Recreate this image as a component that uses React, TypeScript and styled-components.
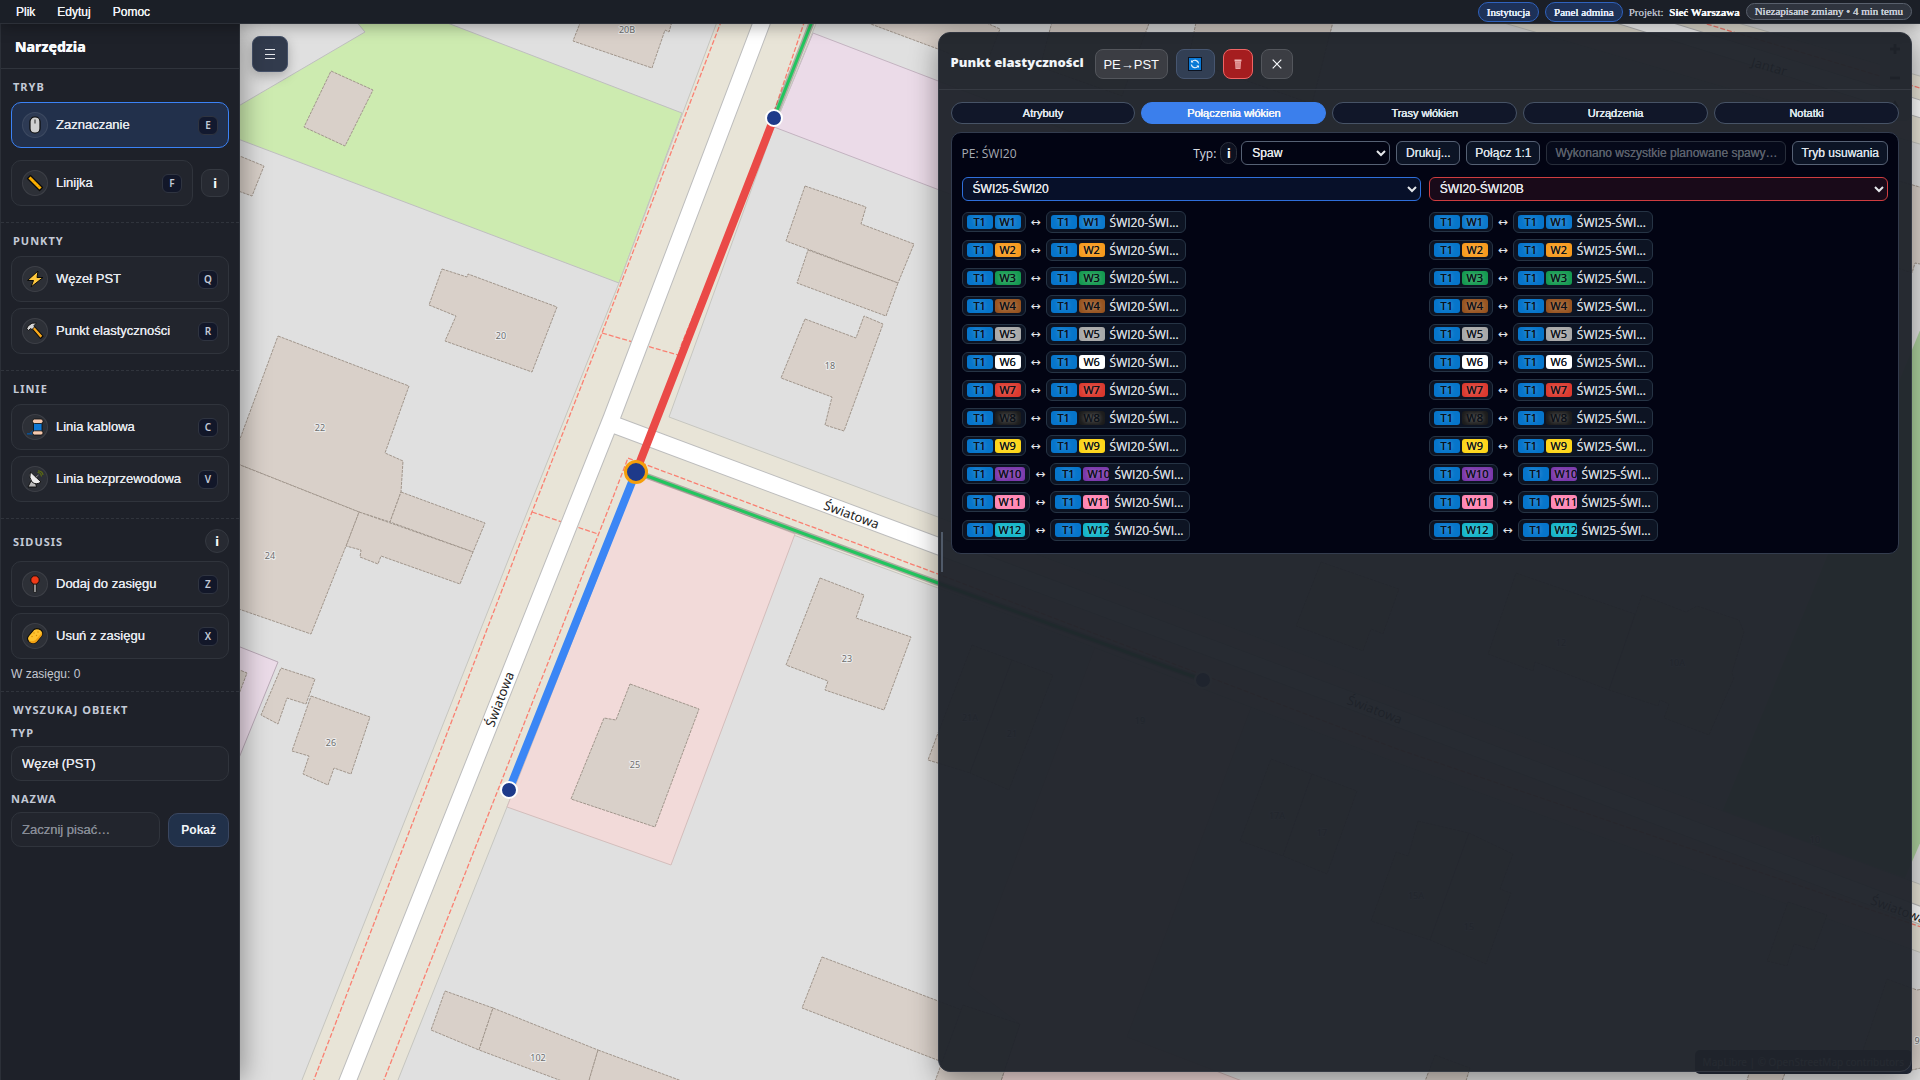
import React from "react";
import styled, { createGlobalStyle, css } from "styled-components";

const sans = `"Liberation Sans", Arial, sans-serif`;
const ui = `"Noto Sans", "Open Sans", sans-serif`;
const plain = `"Open Sans", "Noto Sans", sans-serif`;
const serif = `"Liberation Serif", "Times New Roman", serif`;

/* firms up the glyph edges so light text on dark reads as medium weight */
const firm = css`
  text-shadow: 0 0 0 currentColor;
`;

const GlobalStyle = createGlobalStyle`
  *, *::before, *::after { box-sizing: border-box; }
  html, body { margin: 0; height: 100%; }
  body { background: #1e222a; color: #e5e7eb; font-family: ${sans}; font-size: 12px; }
  #root { height: 100%; }
  button, input, select { font-family: ${sans}; color: inherit; margin: 0; }
  h1, h2, h3, p, ul { margin: 0; padding: 0; }
`;

const Page = styled.div`
  display: flex;
  flex-direction: column;
  height: 100vh;
  overflow: hidden;
`;

/* ---------- top bar ---------- */

const TopBar = styled.header`
  position: relative;
  z-index: 3;
  display: flex;
  align-items: center;
  justify-content: space-between;
  flex: none;
  height: 24px;
  padding: 0 8px;
  background: #1b1f27;
  border-bottom: 1px solid #2c3038;
  box-shadow: 0 2px 16px rgba(0, 0, 0, 0.35);
`;

const Menu = styled.nav`
  display: flex;
  gap: 6px;
`;

const MenuItem = styled.button`
  border: 0;
  padding: 0 8px;
  background: none;
  font-size: 12px;
  line-height: 22px;
  color: #f1f3f6;
  ${firm}
`;

const Status = styled.div`
  display: flex;
  align-items: center;
  gap: 6px;
  font-family: ${serif};
  font-size: 11px;
  color: #b6bcc7;
`;

const Pill = styled.button`
  height: 20px;
  padding: 0 8px;
  border: 1px solid #2f62bd;
  border-radius: 999px;
  background: #1d3158;
  font-family: ${serif};
  font-size: 11px;
  color: #e3ebfa;
  text-shadow: 0 0 0 currentColor, 0 0 0 currentColor;
`;

const Project = styled.span`
  ${firm}
  strong { margin-left: 3px; color: #f8fafc; }
`;

const SaveState = styled.span`
  padding: 0 8px;
  border: 1px solid #59606c;
  border-radius: 999px;
  background: #2f343e;
  font-size: 11px;
  line-height: 15px;
  color: #c5cad3;
  text-shadow: 0 0 0 currentColor, 0 0 0 currentColor;
`;

/* ---------- sidebar ---------- */

const Body = styled.div`
  display: flex;
  flex: 1;
  min-height: 0;
`;

const Sidebar = styled.aside`
  position: relative;
  z-index: 2;
  flex: none;
  width: 240px;
  background: #1e2129;
  border: solid #2c3038;
  border-width: 0 1px;
  box-shadow: 4px 0 24px rgba(0, 0, 0, 0.35);
`;

const SidebarTitle = styled.h1`
  height: 45px;
  padding: 0 14px;
  border-bottom: 1px solid #30343c;
  font-family: ${ui};
  font-size: 14px;
  font-weight: 800;
  line-height: 46px;
  color: #f8fafc;
  ${firm}
`;

const Section = styled.section<{ $gap?: number; $end?: number }>`
  display: flex;
  flex-direction: column;
  gap: ${(p) => p.$gap ?? 6}px;
  padding: 10px 10px ${(p) => p.$end ?? 16}px;
  border-bottom: 1px dashed #30343c;
  &:last-child { border-bottom: 0; }
`;

const SectionHead = styled.div<{ $pull?: number }>`
  display: flex;
  align-items: center;
  justify-content: space-between;
  margin-bottom: ${(p) => p.$pull ?? 2}px;
`;

const SectionTitle = styled.h2`
  padding-left: 2px;
  font-family: ${ui};
  font-size: 11px;
  font-weight: 700;
  line-height: 15px;
  letter-spacing: 1px;
  text-transform: uppercase;
  color: #c3c9d6;
`;

const ToolRow = styled.div`
  display: flex;
  align-items: center;
  gap: 8px;
`;

const Tool = styled.button<{ $active?: boolean }>`
  display: flex;
  align-items: center;
  gap: 8px;
  flex: 1;
  min-height: 46px;
  padding: 0 10px;
  border: 1px solid ${(p) => (p.$active ? "#3b82f6" : "#30343c")};
  border-radius: 10px;
  background: ${(p) => (p.$active ? "#22304b" : "#22252d")};
  font-size: 13px;
  text-align: left;
  color: #e5e8ee;
`;

const ToolIcon = styled.span`
  display: grid;
  place-items: center;
  width: 26px;
  height: 26px;
  border: 1px solid rgba(255, 255, 255, 0.08);
  border-radius: 50%;
  background: rgba(255, 255, 255, 0.05);
`;

const ToolName = styled.span`
  flex: 1;
  padding-bottom: 2px;
  ${firm}
`;

const Key = styled.kbd`
  display: grid;
  place-items: center;
  width: 20px;
  height: 19px;
  border: 1px solid #2f3440;
  border-radius: 6px;
  background: rgba(15, 20, 40, 0.8);
  font-family: ${ui};
  font-size: 10px;
  font-weight: 600;
  color: #c3c9d6;
`;

const Info = styled.button<{ $size: number; $radius: number }>`
  display: grid;
  place-items: center;
  width: ${(p) => p.$size}px;
  height: ${(p) => p.$size}px;
  padding: 0;
  border: 1px solid #353941;
  border-radius: ${(p) => p.$radius}px;
  background: #272a32;
  font-family: ${ui};
  font-size: 12px;
  font-weight: 800;
  color: #f8fafc;
`;

const RangeCount = styled.p`
  font-size: 12px;
  line-height: 18px;
  color: #c3c8d1;
`;

const Field = styled.div`
  display: flex;
  flex-direction: column;
  gap: 5px;
  margin-bottom: 4px;
`;

const FieldLabel = styled.label`
  font-family: ${ui};
  font-size: 11px;
  font-weight: 700;
  line-height: 16px;
  letter-spacing: 1px;
  color: #c3c9d6;
`;

const fieldBox = css`
  height: 35px;
  padding: 0 10px;
  border: 1px solid #30343c;
  border-radius: 10px;
  background: #22252d;
  font-size: 13px;
  color: #e5e8ee;
  ${firm}
`;

const TypeSelect = styled.select`
  ${fieldBox}
  appearance: none;
`;

const NameInput = styled.input`
  ${fieldBox}
  flex: 1;
  min-width: 0;
  &::placeholder { color: #868b95; opacity: 1; }
`;

const ShowButton = styled.button`
  height: 34px;
  padding: 0 12px;
  border: 1px solid #3a4761;
  border-radius: 10px;
  background: #21314a;
  font-size: 12px;
  font-weight: 700;
  color: #f1f5f9;
`;

/* ---------- map ---------- */

const MapArea = styled.main`
  position: relative;
  flex: 1;
  min-width: 0;
  overflow: hidden;
  background: #e0e0e0;
`;

const MapSvg = styled.svg`
  display: block;
  width: 100%;
  height: 100%;
`;

const MenuToggle = styled.button`
  position: absolute;
  top: 12px;
  left: 12px;
  display: grid;
  place-items: center;
  width: 36px;
  height: 36px;
  padding: 0;
  border: 1px solid #46526a;
  border-radius: 8px;
  background: #323b4d;
  box-shadow: 0 4px 12px rgba(0, 0, 0, 0.25);
`;

const ZoomControl = styled.div`
  position: absolute;
  top: 10px;
  right: 10px;
  display: flex;
  flex-direction: column;
  border-radius: 4px;
  background: #c8c8c8;
`;

const ZoomButton = styled.button`
  display: grid;
  place-items: center;
  width: 30px;
  height: 29px;
  padding: 0;
  border: 0;
  background: none;
`;

const Attribution = styled.p`
  position: absolute;
  right: 8px;
  bottom: 6px;
  border-radius: 5px;
  background: #252c3c;
  font-family: ${ui};
  font-size: 10px;
  line-height: 24px;
  color: #d0d4da;
  && { padding: 0 8px; }
  a { color: inherit; text-decoration: none; }
`;

/* ---------- details panel ---------- */

const Panel = styled.section`
  position: absolute;
  top: 8px;
  right: 8px;
  bottom: 8px;
  width: 58%;
  border: 1px solid #343943;
  border-radius: 12px;
  background: rgba(31, 35, 43, 0.965);
  box-shadow: 0 8px 28px rgba(0, 0, 0, 0.4);
`;

const ResizeGrip = styled.div`
  position: absolute;
  top: calc(50% - 20px);
  left: 2px;
  width: 2px;
  height: 40px;
  background: #505a69;
`;

const PanelHead = styled.div`
  display: flex;
  align-items: center;
  gap: 8px;
  height: 57px;
  padding: 6px 12px 0;
  border-bottom: 1px solid #363a42;
`;

const PanelTitle = styled.h2`
  font-family: ${ui};
  font-size: 13px;
  font-weight: 900;
  line-height: 20px;
  color: #f1f5f9;
  && { padding: 0 3px 4px 0; }
`;

const HeadButton = styled.button<{ $tone?: "blue" | "red"; $width: number }>`
  display: grid;
  place-items: center;
  width: ${(p) => p.$width}px;
  height: 30px;
  padding: 0;
  border: 1px solid ${(p) => (p.$tone === "red" ? "#f06464" : p.$tone === "blue" ? "#475670" : "#53565c")};
  border-radius: 8px;
  background: ${(p) => (p.$tone === "red" ? "#a51d1f" : p.$tone === "blue" ? "#323f54" : "#3b3d43")};
  font-size: 13px;
  color: #f8fafc;
`;

const PanelBody = styled.div`
  padding: 12px;
`;

const Tabs = styled.div`
  display: grid;
  grid-template-columns: repeat(5, 1fr);
  gap: 6px;
  margin-bottom: 8px;
`;

const Tab = styled.button<{ $active?: boolean }>`
  height: 22px;
  padding: 0;
  border: 1px solid ${(p) => (p.$active ? "#3b7fec" : "#475366")};
  border-radius: 999px;
  background: ${(p) => (p.$active ? "#3b7fec" : "#111729")};
  font-size: 11px;
  color: ${(p) => (p.$active ? "#f1f5f9" : "#dfe3ea")};
  text-shadow: 0 0 0 currentColor, 0 0 0 currentColor;
`;

const Card = styled.div`
  padding: 8px 10px 12px;
  border: 1px solid #333c4e;
  border-radius: 10px;
  background: #020413;
`;

const Toolbar = styled.div`
  display: flex;
  align-items: center;
  gap: 6px;
  margin-bottom: 12px;
`;

const PointName = styled.span`
  flex: 1;
  font-family: ${plain};
  font-size: 12px;
  color: #a7abb4;
`;

const TypeLabel = styled.label`
  font-family: ${plain};
  font-size: 12px;
  color: #d8dce3;
`;

const TypeInfo = styled.button`
  width: 17px;
  height: 22px;
  margin: 0 -2px;
  padding: 0;
  border: 1px solid #2b303c;
  border-radius: 999px;
  background: #0d1120;
  font-family: ${ui};
  font-size: 12px;
  font-weight: 800;
  color: #f8fafc;
`;

const ModeSelect = styled.select`
  width: 149px;
  height: 24px;
  padding: 0 6px;
  border: 1px solid #566174;
  border-radius: 6px;
  background: #020413;
  font-size: 12px;
  color: #e5e7eb;
  ${firm}
`;

const Action = styled.button<{ $muted?: boolean }>`
  min-width: 64px;
  height: 24px;
  padding: 0 8px;
  border: 1px solid ${(p) => (p.$muted ? "#282e3b" : "#566174")};
  border-radius: 6px;
  background: ${(p) => (p.$muted ? "#060a1a" : "#0c1425")};
  font-size: 12px;
  color: ${(p) => (p.$muted ? "#5c616c" : "#dde1e8")};
  ${firm}
`;

const Columns = styled.div`
  display: grid;
  grid-template-columns: 1fr 1fr;
  gap: 10px 8px;
`;

const CableSelect = styled.select<{ $tone: "blue" | "red" }>`
  height: 24px;
  padding: 0 6px;
  border: 1px solid ${(p) => (p.$tone === "blue" ? "#2f6fdb" : "#cf3d40")};
  border-radius: 6px;
  background: ${(p) => (p.$tone === "blue" ? "#071029" : "#190a19")};
  font-size: 12px;
  color: #e5e7eb;
  ${firm}
`;

const FiberList = styled.ul`
  display: flex;
  flex-direction: column;
  gap: 6px;
  list-style: none;
`;

const FiberRow = styled.li`
  display: flex;
  align-items: center;
  gap: 4px;
  height: 22px;
`;

const Chip = styled.span<{ $target?: boolean }>`
  display: flex;
  align-items: center;
  gap: 2px;
  width: ${(p) => (p.$target ? "140px" : "auto")};
  height: ${(p) => (p.$target ? 22 : 20)}px;
  padding: 0 4px;
  border: 1px solid #263445;
  border-radius: 6px;
  background: #0d1423;
`;

const Tag = styled.span<{ $color: string; $clip?: boolean }>`
  flex: none;
  min-width: 26px;
  width: ${(p) => (p.$clip ? "26px" : "auto")};
  height: 14px;
  padding: 0 4px;
  overflow: hidden;
  border-radius: 3px;
  background: ${(p) => p.$color};
  font-family: ${plain};
  font-size: 11px;
  line-height: 14px;
  text-align: center;
  text-shadow: 0 0 0 #0b1018, 0 0 4px rgba(255, 255, 255, 0.35), 0 0 6px rgba(255, 255, 255, 0.35);
  color: #0b1018;
`;

const CableName = styled.span`
  padding-left: 3px;
  font-family: ${plain};
  font-size: 12px;
  white-space: nowrap;
  color: #d3d7de;
  ${firm}
`;

const Link = styled.span`
  width: 12px;
  font-family: "DejaVu Sans", sans-serif;
  font-size: 12px;
  text-align: center;
  color: #e5e7eb;
`;

/* ---------- icons ---------- */

const I = ({ children, size = 18 }: { children: React.ReactNode; size?: number }) => (
  <svg width={size} height={size} viewBox="0 0 18 18" aria-hidden="true">{children}</svg>
);

const MouseIcon = () => (
  <I><rect x="4" y="1" width="10" height="16" rx="4.500" fill="#cfcfcf" stroke="#0b0b0b" strokeWidth="1.2" /><path d="M9 4v3" stroke="#555" strokeWidth="1.4" strokeLinecap="round" /></I>
);
const RulerIcon = () => (
  <I><path d="M1.5 4.5 4.5 1.5 16.500 13.500 13.500 16.500Z" fill="#ffb200" stroke="#0b0b0b" strokeWidth="1.3" strokeLinejoin="round" /><path d="M6 4.500 5 5.500M8.500 7 7.500 8M11 9.500 10 10.500M13.500 12 12.500 13" stroke="#c98000" strokeWidth=".8" /></I>
);
const BoltIcon = () => (
  <I><path d="M12 1 1.500 10.500H7.500L5 17 17 7.500H11Z" fill="#ffc83d" stroke="#0b0b0b" strokeWidth="1" strokeLinejoin="round" /></I>
);
const HammerIcon = () => (
  <I><path d="M5.500 6 8 4 17 14 14.500 16.500Z" fill="#f8a81b" stroke="#0b0b0b" strokeWidth="1.1" strokeLinejoin="round" /><path d="M.800 6.500 2 4 6 1.200 10.500 1 8 3.500 8.500 5 6 7.500 4.500 6.500 2.500 8.500Z" fill="#d6d6d6" stroke="#0b0b0b" strokeWidth=".9" strokeLinejoin="round" /></I>
);
const ThreadIcon = () => (
  <I><path d="M1 15.800H7" fill="none" stroke="#0b4f8f" strokeWidth="1.6" /><path d="M4 15.500 8 12" fill="none" stroke="#0b4f8f" strokeWidth="1.2" /><rect x="7.500" y="4.500" width="8.500" height="10" fill="#0f78d4" stroke="#0b0b0b" strokeWidth=".8" /><rect x="6.500" y="1" width="10.500" height="4.500" rx="2" fill="#f6c9ae" stroke="#0b0b0b" strokeWidth=".8" /><rect x="6.500" y="12.800" width="10.500" height="4.200" rx="2" fill="#f6c9ae" stroke="#0b0b0b" strokeWidth=".8" /></I>
);
const DishIcon = () => (
  <I><path d="M2 17 5 11H9L10.500 17Z" fill="#b9b9b9" stroke="#0b0b0b" strokeWidth=".9" /><path d="M4.500 2 15 12Q10 15.500 6 12 2.500 7.500 4.500 2Z" fill="#ececec" stroke="#0b0b0b" strokeWidth=".9" strokeLinejoin="round" /><path d="M9.500 7.500 12.500 5" stroke="#888" strokeWidth="1" /><path d="M11.500 2.500Q15 2.500 15.500 6.500M12 .8Q16.500 1 17 5" fill="none" stroke="#5c6b12" strokeWidth="1.2" /></I>
);
const PinIcon = () => (
  <I><rect x="7.600" y="8" width="2.800" height="9.500" rx="1" fill="#9b9b9b" stroke="#0b0b0b" strokeWidth=".8" /><circle cx="9" cy="5" r="4.200" fill="#f03a17" stroke="#0b0b0b" strokeWidth=".9" /></I>
);
const SpongeIcon = () => (
  <I><path d="M8 2.500Q11 .5 15 3 18 5.500 15.500 9L10.500 15Q7.500 17.500 3.500 15 0 12.500 2.500 9Z" fill="#ffc22e" stroke="#0b0b0b" strokeWidth="1.1" /><path d="M10.500 15Q7.500 17.500 3.500 15L3 14Q7 15 9.500 13L16.200 5.500Q16.500 7.500 15.500 9Z" fill="#f3a112" /><g fill="#d98c00"><circle cx="8" cy="6" r=".7" /><circle cx="12" cy="5" r=".7" /><circle cx="6" cy="9.500" r=".7" /><circle cx="10.500" cy="8.500" r=".7" /></g></I>
);
const RefreshIcon = () => (
  <svg width="14" height="14" viewBox="0 0 14 14" aria-hidden="true"><rect x=".5" y=".5" width="13" height="13" fill="#0a7ad6" stroke="#0b1220" /><path d="M3.800 5A3.700 3.700 0 0 1 10.600 6.500M10.200 9A3.700 3.700 0 0 1 3.400 7.500" fill="none" stroke="#e8f2fc" strokeWidth="1.200" /><path d="M3 3v2.600h2.600zM11 11V8.400H8.400z" fill="#e8f2fc" /></svg>
);
const TrashIcon = () => (
  <svg width="8" height="12" viewBox="0 0 8 12" aria-hidden="true"><path d="M.5 1.500h7v2h-7z" fill="#efb4b4" /><path d="M1 3.500h6l-.5 7.500h-5z" fill="#e9a3a3" /><path d="M3 4.500v5.500M5 4.500v5.500" stroke="#c45f5f" strokeWidth=".8" /></svg>
);
const CloseIcon = () => (
  <svg width="10" height="10" viewBox="0 0 10 10" aria-hidden="true"><path d="M.7.7l8.600 8.600M9.300.7.7 9.300" stroke="#f8fafc" strokeWidth="1.200" /></svg>
);
const BurgerIcon = () => (
  <svg width="12" height="12" viewBox="0 0 12 12" aria-hidden="true"><path d="M1 1.500h10M1 6.500h10M1 10.500h10" stroke="#e5e7eb" /></svg>
);

/* ---------- map drawing ---------- */

const buildings = [
  "331,71 373,90 345,146 304,127",
  "230,152 264,166 252,196 230,188",
  "582,18 573,41 652,68 665,30 669,32 673,18",
  "442,269 467,277 468,274 557,307 532,372 445,341 456,316 429,305",
  "278,336 409,386 385,453 403,461 401,492 390,522 359,512 230,461 230,466",
  "401,492 485,523 473,552 390,522",
  "359,512 473,552 460,584 381,556 378,564 360,557 361,550 346,546",
  "230,461 359,512 346,546 311,634 230,606",
  "281,668 315,679 306,704 287,698 278,724 261,715",
  "311,696 370,717 351,774 334,768 328,785 303,774 309,756 292,751",
  "230,666 247,673 239,694 230,690",
  "445,991 493,1008 479,1050 431,1030",
  "493,1008 598,1050 588,1084 570,1084 479,1050",
  "598,1050 690,1084 588,1084",
  "822,957 962,1010 945,1063 802,1008",
  "805,186 866,207 861,224 914,244 898,283 786,241",
  "808,250 898,283 886,316 797,283",
  "805,319 856,338 864,316 883,324 844,431 825,425 832,397 781,378",
  "820,578 864,595 856,618 911,637 884,710 825,690 828,681 786,665",
  "630,684 699,709 655,827 571,799 604,718 616,720",
  "860,20 938,49 985,68 1000,29 980,20",
  "1053,18 1151,18 1122,96 1040,67",
  "1197,18 1334,18 1312,104 1188,60",
  "972,645 1012,660 970,773 928,760 938,733",
  "1012,660 1053,675 1009,790 970,773",
  "1271,759 1312,774 1283,856 1240,841",
  "1312,774 1357,791 1327,874 1283,856",
  "1321,562 1399,589 1383,634 1371,629 1363,651 1296,626",
  "1516,573 1635,614 1609,690 1535,662 1533,671 1488,654",
  "1642,595 1686,612 1697,606 1739,620 1744,632 1732,673 1734,678 1709,735 1664,718 1669,704 1660,700 1658,706 1609,690",
  "1418,821 1469,833 1430,940 1371,921 1396,852 1408,856",
  "1469,833 1513,854 1500,889 1511,893 1486,964 1430,940",
  "1788,902 1827,915 1814,950 1794,944 1787,966 1767,961",
  "963,1005 1020,1024 1000,1084 934,1084",
  "1435,1055 1470,1068 1465,1084 1424,1084",
  "1750,1070 1785,1073 1781,1084 1746,1084",
  "1887,979 1917,990 1930,988 1930,1066 1912,1070 1863,1050",
  "1885,177 1930,190 1930,266 1915,263 1912,273 1880,262",
];

const numbers: [string, number, number][] = [
  ["20B", 627, 33], ["20", 501, 339], ["22", 320, 431], ["24", 270, 559], ["26", 331, 746],
  ["102", 538, 1061], ["18", 830, 369], ["25", 635, 768], ["23", 847, 662], ["21A", 970, 721],
  ["21", 1012, 737], ["19", 1140, 724], ["17A", 1277, 819], ["17", 1322, 836], ["12", 1561, 646],
  ["10A", 1677, 666], ["15A", 1416, 899], ["15", 1469, 930], ["10", 1815, 843], ["9", 1917, 1044],
];

const MapDrawing = () => (
  <MapSvg viewBox="240 24 1680 1056" preserveAspectRatio="xMinYMin slice" role="img" aria-label="Mapa">
    <g stroke="#bfbfbf" strokeWidth="1">
      <path d="M230 111 365 32 350 14 424 14 682 113 619 283 230 136Z" fill="#cdebb0" />
      <path d="M813 33 1100 143 1060 236 774 127Z" fill="#ebdbe8" stroke="#c3b3c0" />
      <path d="M230 643 278 662 230 780Z" fill="#ebdbe8" stroke="#b9a9b6" />
      <path d="M1930 306 1722 812 1905 878 1930 820Z" fill="#add19e" stroke="none" />
      <path d="M1095 647 1252 705 1127 1037 1250 1084 1000 1084 1020 1024 968 985Z" fill="#f2dad9" stroke="#d0b8b7" />
    </g>
    <g fill="#e8e4d7" stroke="#c6c6c0">
      <path d="M720 14 619 283 532 500 298 1090 394 1090 507 807 630 500 638 478 938 588 1400 764 1930 956 1930 888 1400 691 938 517 669 417 774 127 820 14Z" />
      <path d="M1473 14 1930 147 1930 79 1707 14Z" />
    </g>
    <path d="M638 474 795 534 671 865 507 807Z" fill="#f2dad9" stroke="#d3bdbb" />
    <g fill="none" stroke="#fa8072" strokeWidth="1.3" strokeDasharray="5 2">
      <path d="M724 14 602 333 532 512 310 1090" />
      <path d="M807 14 756 165 680 348" />
      <path d="M380 1090 612 500 628 458 938 574 1400 750 1930 930" />
      <path d="M602 333 678 355M532 512 598 534" />
      <path d="M1680 16 1930 91" />
    </g>
    <g fill="none" strokeLinejoin="round">
      <path d="M765 14 612 417 344 1090M612 424 938 546 1400 719 1930 919M1590 6 1930 112" stroke="#bdbdbd" strokeWidth="18" />
      <path d="M765 14 612 417 344 1090M612 424 938 546 1400 719 1930 919M1590 6 1930 112" stroke="#fff" strokeWidth="16" />
    </g>
    <g fill="#d9d0c9" stroke="#a1968c" strokeDasharray="3 1">
      {buildings.map((points) => <polygon key={points} points={points} />)}
    </g>
    <g fontFamily={ui} fontSize="9" fill="#6f6f6f" stroke="#ececec" strokeWidth="2" paintOrder="stroke" textAnchor="middle">
      {numbers.map(([label, x, y]) => <text key={label} x={x} y={y}>{label}</text>)}
    </g>
    <g fontFamily={ui} fontSize="13" fill="#222" textAnchor="middle">
      <text transform="translate(850 519) rotate(20)">Światowa</text>
      <text transform="translate(504 701) rotate(-69)">Światowa</text>
      <text transform="translate(1373 714) rotate(21)">Światowa</text>
      <text transform="translate(1897 914) rotate(20)">Światowa</text>
      <text transform="translate(1768 71) rotate(16)">Jantar</text>
    </g>
    <g fill="none" strokeLinecap="round">
      <path d="M774 118 815 14M636 472 938 583 1203 680" stroke="rgba(60,70,60,.35)" strokeWidth="6" />
      <path d="M774 118 815 14M636 472 938 583 1203 680" stroke="#22c55e" strokeWidth="3" />
      <path d="M636 472 774 118" stroke="#ea4a47" strokeWidth="8" />
      <path d="M636 472 509 790" stroke="#3b86f5" strokeWidth="8" />
    </g>
    <g fill="#1e3a8a" stroke="#fff" strokeWidth="2">
      <circle cx="774" cy="118" r="8" />
      <circle cx="509" cy="790" r="8" />
      <circle cx="1203" cy="680" r="8" />
      <circle cx="636" cy="472" r="10.500" stroke="#f59e0b" strokeWidth="3" />
    </g>
  </MapSvg>
);

/* ---------- data ---------- */

const fiberColors = [
  "#0b78cc", "#f79a1c", "#149a50", "#97531f", "#a8a8a8", "#ffffff",
  "#dc392e", "#1c1c1c", "#fdd516", "#7936ab", "#ff85b3", "#12b5c9",
];

const Fibers = ({ target }: { target: string }) => (
  <FiberList>
    {fiberColors.map((color, i) => (
      <FiberRow key={color}>
        <Chip>
          <Tag $color="#0675cb">T1</Tag>
          <Tag $color={color}>W{i + 1}</Tag>
        </Chip>
        <Link>↔</Link>
        <Chip $target>
          <Tag $color="#0675cb">T1</Tag>
          <Tag $color={color} $clip>W{i + 1}</Tag>
          <CableName>{target}</CableName>
        </Chip>
      </FiberRow>
    ))}
  </FiberList>
);

const ToolButton = ({ icon, name, hotkey, active }: { icon: React.ReactNode; name: string; hotkey: string; active?: boolean }) => (
  <Tool $active={active}>
    <ToolIcon>{icon}</ToolIcon>
    <ToolName>{name}</ToolName>
    <Key>{hotkey}</Key>
  </Tool>
);

export default function App() {
  return (
    <Page>
      <GlobalStyle />
      <TopBar>
        <Menu>
          <MenuItem>Plik</MenuItem>
          <MenuItem>Edytuj</MenuItem>
          <MenuItem>Pomoc</MenuItem>
        </Menu>
        <Status>
          <Pill>Instytucja</Pill>
          <Pill>Panel admina</Pill>
          <Project>Projekt: <strong>Sieć Warszawa</strong></Project>
          <SaveState>Niezapisane zmiany • 4 min temu</SaveState>
        </Status>
      </TopBar>
      <Body>
        <Sidebar>
          <SidebarTitle>Narzędzia</SidebarTitle>
          <Section $gap={12}>
            <SectionHead $pull={-4}><SectionTitle>Tryb</SectionTitle></SectionHead>
            <ToolRow><ToolButton active icon={<MouseIcon />} name="Zaznaczanie" hotkey="E" /></ToolRow>
            <ToolRow>
              <ToolButton icon={<RulerIcon />} name="Linijka" hotkey="F" />
              <Info $size={28} $radius={9} aria-label="Informacje o linijce">i</Info>
            </ToolRow>
          </Section>
          <Section>
            <SectionHead><SectionTitle>Punkty</SectionTitle></SectionHead>
            <ToolButton icon={<BoltIcon />} name="Węzeł PST" hotkey="Q" />
            <ToolButton icon={<HammerIcon />} name="Punkt elastyczności" hotkey="R" />
          </Section>
          <Section>
            <SectionHead><SectionTitle>Linie</SectionTitle></SectionHead>
            <ToolButton icon={<ThreadIcon />} name="Linia kablowa" hotkey="C" />
            <ToolButton icon={<DishIcon />} name="Linia bezprzewodowa" hotkey="V" />
          </Section>
          <Section $end={8}>
            <SectionHead>
              <SectionTitle>Sidusis</SectionTitle>
              <Info $size={24} $radius={12} aria-label="Informacje o Sidusis">i</Info>
            </SectionHead>
            <ToolButton icon={<PinIcon />} name="Dodaj do zasięgu" hotkey="Z" />
            <ToolButton icon={<SpongeIcon />} name="Usuń z zasięgu" hotkey="X" />
            <RangeCount>W zasięgu: 0</RangeCount>
          </Section>
          <Section>
            <SectionHead><SectionTitle>Wyszukaj obiekt</SectionTitle></SectionHead>
            <Field>
              <FieldLabel htmlFor="object-type">TYP</FieldLabel>
              <TypeSelect id="object-type"><option>Węzeł (PST)</option></TypeSelect>
            </Field>
            <Field>
              <FieldLabel htmlFor="object-name">NAZWA</FieldLabel>
              <ToolRow>
                <NameInput id="object-name" placeholder="Zacznij pisać…" />
                <ShowButton>Pokaż</ShowButton>
              </ToolRow>
            </Field>
          </Section>
        </Sidebar>
        <MapArea>
          <MapDrawing />
          <MenuToggle aria-label="Menu"><BurgerIcon /></MenuToggle>
          <ZoomControl>
            <ZoomButton aria-label="Przybliż"><svg width="12" height="12" viewBox="0 0 12 12"><path d="M6 1v10M1 6h10" stroke="#111" strokeWidth="3" /></svg></ZoomButton>
            <ZoomButton aria-label="Oddal"><svg width="12" height="12" viewBox="0 0 12 12"><path d="M1 6h10" stroke="#111" strokeWidth="3" /></svg></ZoomButton>
            <ZoomButton aria-label="Północ"><svg width="8" height="14" viewBox="0 0 8 14"><path d="M4 0 8 7H0Z" fill="#111" /><path d="M4 14 8 7H0Z" fill="#aaa" /></svg></ZoomButton>
          </ZoomControl>
          <Attribution><a href="#maplibre">MapLibre</a> | <a href="#osm">© OpenStreetMap contributors</a></Attribution>
          <Panel>
            <ResizeGrip />
            <PanelHead>
              <PanelTitle>Punkt elastyczności</PanelTitle>
              <HeadButton $width={73}>PE→PST</HeadButton>
              <HeadButton $width={39} $tone="blue" aria-label="Odśwież"><RefreshIcon /></HeadButton>
              <HeadButton $width={30} $tone="red" aria-label="Usuń"><TrashIcon /></HeadButton>
              <HeadButton $width={32} aria-label="Zamknij"><CloseIcon /></HeadButton>
            </PanelHead>
            <PanelBody>
              <Tabs role="tablist">
                <Tab role="tab">Atrybuty</Tab>
                <Tab role="tab" $active aria-selected="true">Połączenia włókien</Tab>
                <Tab role="tab">Trasy włókien</Tab>
                <Tab role="tab">Urządzenia</Tab>
                <Tab role="tab">Notatki</Tab>
              </Tabs>
              <Card>
                <Toolbar>
                  <PointName>PE: ŚWI20</PointName>
                  <TypeLabel htmlFor="joint-type">Typ:</TypeLabel>
                  <TypeInfo aria-label="Informacje o typie">i</TypeInfo>
                  <ModeSelect id="joint-type"><option>Spaw</option></ModeSelect>
                  <Action>Drukuj...</Action>
                  <Action>Połącz 1:1</Action>
                  <Action $muted>Wykonano wszystkie planowane spawy…</Action>
                  <Action>Tryb usuwania</Action>
                </Toolbar>
                <Columns>
                  <CableSelect $tone="blue" aria-label="Kabel lewy"><option>ŚWI25-ŚWI20</option></CableSelect>
                  <CableSelect $tone="red" aria-label="Kabel prawy"><option>ŚWI20-ŚWI20B</option></CableSelect>
                  <Fibers target="ŚWI20-ŚWI..." />
                  <Fibers target="ŚWI25-ŚWI..." />
                </Columns>
              </Card>
            </PanelBody>
          </Panel>
        </MapArea>
      </Body>
    </Page>
  );
}
